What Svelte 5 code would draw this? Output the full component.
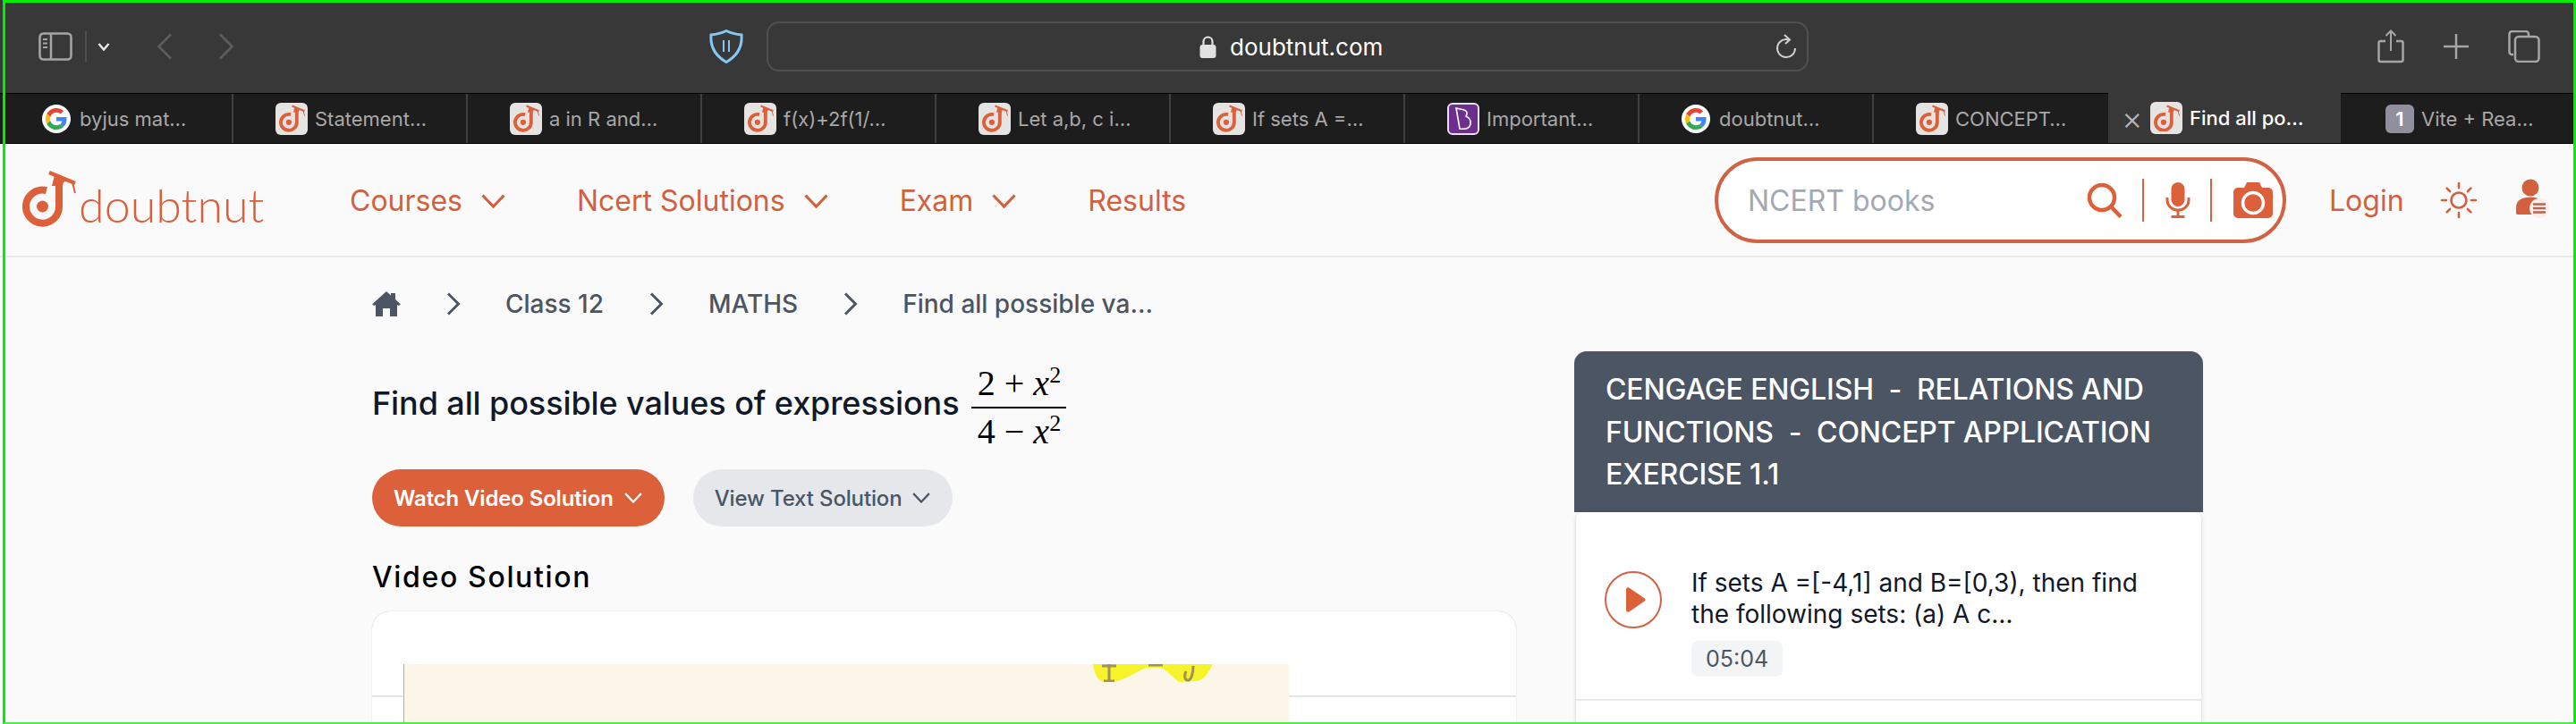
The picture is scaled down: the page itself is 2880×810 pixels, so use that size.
<script lang="ts">
  const tabs = [
    { icon: 'google', title: 'byjus mat…' },
    { icon: 'dn', title: 'Statement…' },
    { icon: 'dn', title: 'a in R and…' },
    { icon: 'dn', title: 'f(x)+2f(1/…' },
    { icon: 'dn', title: 'Let a,b, c i…' },
    { icon: 'dn', title: 'If sets A =…' },
    { icon: 'byjus', title: 'Important…' },
    { icon: 'google', title: 'doubtnut…' },
    { icon: 'dn', title: 'CONCEPT…' },
    { icon: 'dn', title: 'Find all po…', active: true },
    { icon: 'one', title: 'Vite + Rea…' }
  ];
  const navItems = [
    { label: 'Courses', caret: true },
    { label: 'Ncert Solutions', caret: true },
    { label: 'Exam', caret: true },
    { label: 'Results', caret: false }
  ];
</script>

{#snippet dnMark(size)}
  <svg width={size} height={size * 64 / 60} viewBox="0 0 60 64" fill="none" stroke="currentColor">
    <path d="M27 23.2A18.5 18.5 0 1 0 41 41V17" stroke-width="8" />
    <circle cx="22.5" cy="41" r="6.5" fill="currentColor" stroke="none" />
    <path d="M30 3L59 15" stroke-width="4.5" />
    <path d="M36 6L33 18H38L43 25L46 14L50 12Z" fill="currentColor" stroke="none" />
    <path d="M56 14L59 26" stroke-width="2" />
  </svg>
{/snippet}

{#snippet chevron(w, h, sw)}
  <svg width={w} height={h} viewBox="0 0 27 16" fill="none" stroke="currentColor" stroke-width={sw} preserveAspectRatio="none">
    <path d="M1.5 1.5L13.5 14L25.5 1.5" />
  </svg>
{/snippet}

{#snippet crumbArrow()}
  <svg class="crumb-arrow" width="16" height="26" viewBox="0 0 16 26" fill="none" stroke="currentColor" stroke-width="3">
    <path d="M2 1.5L13.5 13L2 24.5" />
  </svg>
{/snippet}

<div class="screen">
  <header class="toolbar">
    <div class="tool-left">
      <svg width="38" height="32" viewBox="0 0 38 32" fill="none" stroke="#a6a6a6" stroke-width="2.5">
        <rect x="1.5" y="1.5" width="35" height="29" rx="4" />
        <path d="M14 2V30" />
        <path d="M5 8H10M5 12.5H10M5 17H10" stroke-width="2" />
      </svg>
      <span class="tool-sep"></span>
      <svg class="small-caret" width="14" height="9" viewBox="0 0 14 9" fill="none" stroke="#e6e6e6" stroke-width="2.5">
        <path d="M1.5 1L7 7.5L12.5 1" />
      </svg>
      <svg class="back" width="18" height="30" viewBox="0 0 18 30" fill="none" stroke="#5e5e5e" stroke-width="2.5">
        <path d="M16 1.5L2.5 15L16 28.5" />
      </svg>
      <svg class="forward" width="18" height="30" viewBox="0 0 18 30" fill="none" stroke="#5e5e5e" stroke-width="2.5">
        <path d="M2 1.5L15.5 15L2 28.5" />
      </svg>
    </div>
    <svg class="shield" width="38" height="38" viewBox="0 0 38 38" fill="none" stroke="#84c8f5" stroke-width="3">
      <path d="M19 1.5C25 4.5 30 5.5 36 6C37 18 32 29 19 36.5C6 29 1 18 2 6C8 5.5 13 4.5 19 1.5Z" />
      <path d="M16 12V25M22 12V25" stroke-width="2" />
    </svg>
    <div class="urlbar">
      <span class="url-center">
        <svg width="19" height="25" viewBox="0 0 19 25" fill="none">
          <path d="M4.5 11V6.5a5 5 0 0 1 10 0V11" stroke="#e2e2e2" stroke-width="2.2" />
          <rect x="0.5" y="10" width="18" height="15" rx="3" fill="#e2e2e2" />
        </svg>
        <span class="url-text">doubtnut.com</span>
      </span>
      <svg class="reload" width="24" height="28" viewBox="0 0 24 28" fill="none" stroke="#d0d0d0" stroke-width="2">
        <path d="M15 6.5A10 10 0 1 0 22 16" />
        <path d="M10 1L16 6.5L11 11" />
      </svg>
    </div>
    <div class="tool-right">
      <svg width="30" height="38" viewBox="0 0 30 38" fill="none" stroke="#a6a6a6" stroke-width="2.5">
        <path d="M9 13H3.5a2 2 0 0 0-2 2V34a2 2 0 0 0 2 2H26.5a2 2 0 0 0 2-2V15a2 2 0 0 0-2-2H21" />
        <path d="M15 24V2M9.5 7L15 1.5L20.5 7" stroke-width="2" />
      </svg>
      <svg width="28" height="28" viewBox="0 0 28 28" stroke="#a6a6a6" stroke-width="2.5">
        <path d="M14 0V28M0 14H28" />
      </svg>
      <svg width="36" height="36" viewBox="0 0 36 36" fill="none" stroke="#a6a6a6" stroke-width="2.5">
        <path d="M6 27H4a3 3 0 0 1-2.5-3V4a3 3 0 0 1 3-3H20a3 3 0 0 1 3 3V7" />
        <rect x="8" y="7" width="26.5" height="28" rx="4" />
      </svg>
    </div>
  </header>

  <nav class="tabstrip">
    {#each tabs as tab}
      <div class="tab" class:active={tab.active}>
        {#if tab.active}<span class="tab-close">×</span>{/if}
        {#if tab.icon === 'dn'}
          <span class="fav fav-dn">{@render dnMark(29)}</span>
        {:else if tab.icon === 'google'}
          <span class="fav-google">
            <svg width="24" height="24" viewBox="0 0 48 48">
              <path fill="#EA4335" d="M24 9.5c3.54 0 6.71 1.22 9.21 3.6l6.85-6.85C35.9 2.38 30.47 0 24 0 14.62 0 6.51 5.38 2.56 13.22l7.98 6.19C12.43 13.72 17.74 9.5 24 9.5z" />
              <path fill="#4285F4" d="M46.98 24.55c0-1.57-.15-3.09-.38-4.55H24v9.02h12.94c-.58 2.96-2.26 5.48-4.78 7.18l7.73 6c4.51-4.18 7.09-10.36 7.09-17.65z" />
              <path fill="#FBBC05" d="M10.53 28.59c-.48-1.45-.76-2.99-.76-4.59s.27-3.14.76-4.59l-7.98-6.19C.92 16.46 0 20.12 0 24c0 3.88.92 7.54 2.56 10.78l7.97-6.19z" />
              <path fill="#34A853" d="M24 48c6.48 0 11.93-2.13 15.89-5.81l-7.73-6c-2.15 1.45-4.92 2.3-8.16 2.3-6.26 0-11.57-4.22-13.47-9.91l-7.98 6.19C6.51 42.62 14.62 48 24 48z" />
            </svg>
          </span>
        {:else if tab.icon === 'byjus'}
          <span class="fav fav-byjus">
            <svg width="24" height="28" viewBox="0 0 24 28" fill="none" stroke="#fff" stroke-width="1.6">
              <path d="M4 2L13 4C16 5 17 8 15 11C19 13 21 16 20 20C19 24 15 26 8 25Z" />
            </svg>
          </span>
        {:else}
          <span class="fav-one">1</span>
        {/if}
        <span class="tab-title">{tab.title}</span>
      </div>
    {/each}
  </nav>

  <div class="page">
    <div class="sitebar">
      <a class="logo">
        {@render dnMark(60)}
        <span class="logo-word">doubtnut</span>
      </a>
      <ul class="nav">
        {#each navItems as item}
          <li>
            {item.label}
            {#if item.caret}{@render chevron(27, 16, 3.2)}{/if}
          </li>
        {/each}
      </ul>
      <div class="search">
        <span class="placeholder">NCERT books</span>
        <svg class="search-icon" width="40" height="40" viewBox="0 0 40 40" fill="none" stroke="currentColor" stroke-width="4.5">
          <circle cx="17" cy="17" r="14" />
          <path d="M27 27L38 38.5" />
        </svg>
        <span class="search-sep"></span>
        <svg width="28" height="40" viewBox="0 0 28 40" fill="none" stroke="currentColor">
          <rect x="6.5" y="0" width="15" height="27" rx="7.5" fill="currentColor" stroke="none" />
          <path d="M2 17V20A12 11 0 0 0 26 20V17" stroke-width="3" />
          <path d="M14 31V38" stroke-width="3" />
          <path d="M6.5 38.5H21.5" stroke-width="3" />
        </svg>
        <span class="search-sep"></span>
        <svg width="44" height="40" viewBox="0 0 44 40">
          <path fill="currentColor" d="M15 0H29L32 6H39A5 5 0 0 1 44 11V35A5 5 0 0 1 39 40H5A5 5 0 0 1 0 35V11A5 5 0 0 1 5 6H12Z" />
          <circle cx="22" cy="23" r="11.5" fill="none" stroke="#fff" stroke-width="3.5" />
        </svg>
      </div>
      <span class="login">Login</span>
      <svg class="sun" width="42" height="42" viewBox="0 0 42 42" fill="none" stroke="currentColor" stroke-width="2.6" stroke-linecap="round">
        <circle cx="21" cy="21" r="8.5" />
        <path d="M21 2V7M21 35V40M2 21H7M35 21H40M7.6 7.6L11 11M31 31L34.4 34.4M7.6 34.4L11 31M31 11L34.4 7.6" />
      </svg>
      <svg class="user" width="44" height="48" viewBox="0 0 44 48">
        <circle cx="18" cy="10" r="9.5" fill="currentColor" />
        <path fill="currentColor" d="M2 38V32C2 24 9 20.5 18 20.5S34 24 34 32V38C34 40 32 40 30 40H5C3 40 2 40 2 38Z" />
        <circle cx="28" cy="33" r="11" fill="#fbeee9" />
        <path d="M21 28.5H35M21 33H35M21 37.5H35" stroke="#b9654f" stroke-width="2.6" />
      </svg>
    </div>

    <main class="content">
      <section class="question">
        <div class="crumbs">
          <svg class="home" width="32" height="28" viewBox="0 0 32 28">
            <path fill="#4b5563" d="M16 0L21 4.5V2H26V9L32 14.5L29.5 16L28 15V28H20V19H12V28H4V15L2.5 16L0 14.5Z" />
          </svg>
          {@render crumbArrow()}
          <span>Class 12</span>
          {@render crumbArrow()}
          <span>MATHS</span>
          {@render crumbArrow()}
          <span>Find all possible va…</span>
        </div>

        <h1 class="title">
          <span>Find all possible values of expressions</span>
          <span class="frac">
            <span class="num">2 + <i>x</i><sup>2</sup></span>
            <span class="den">4 − <i>x</i><sup>2</sup></span>
          </span>
        </h1>

        <div class="actions">
          <button class="btn btn-primary">Watch Video Solution {@render chevron(20, 12, 3)}</button>
          <button class="btn btn-muted">View Text Solution {@render chevron(20, 12, 3)}</button>
        </div>

        <h2 class="video-heading">Video Solution</h2>
        <div class="video-card">
          <div class="video-rule"></div>
          <div class="video-frame">
            <svg class="scribble" width="134" height="20" viewBox="0 0 134 20">
              <path fill="#f6f32a" d="M0 0H134C130 8 124 18 116 19L96 20C88 14 84 8 76 4H60C48 8 36 18 22 20H12C4 18 1 8 0 0Z" />
              <path d="M18 0V19M12 19H24M10 2H26M62 1H78M112 2C112 10 110 18 106 18C102 18 102 12 104 8" fill="none" stroke="#a0905a" stroke-width="3" />
            </svg>
          </div>
        </div>
      </section>

      <aside class="playlist">
        <div class="playlist-head">CENGAGE ENGLISH &nbsp;-&nbsp; RELATIONS AND FUNCTIONS &nbsp;-&nbsp; CONCEPT APPLICATION EXERCISE 1.1</div>
        <div class="playlist-body">
          <div class="item">
            <span class="play">
              <svg width="22" height="28" viewBox="0 0 22 28">
                <path fill="#dc603a" d="M0 3C0 .5 2 -.5 4 1L20 12C22 13 22 15 20 16L4 27C2 28.5 0 27.5 0 25Z" />
              </svg>
            </span>
            <div class="item-text">
              <p>If sets A =[-4,1] and B=[0,3), then find the following sets: (a) A c…</p>
              <span class="duration">05:04</span>
            </div>
          </div>
        </div>
      </aside>
    </main>
  </div>

  <div class="frame"></div>
</div>

<style>
  :global(body) {
    margin: 0;
    background: #fafafa;
  }
  .screen {
    position: relative;
    width: 2880px;
    height: 810px;
    overflow: hidden;
    font-family: Inter, "Noto Sans", sans-serif;
  }
  .frame {
    position: absolute;
    top: 0;
    left: 3px;
    right: 0;
    bottom: 0;
    border-style: solid;
    border-color: #00f000;
    border-width: 3px 3px 2px 3px;
    border-bottom-color: #55e855;
    pointer-events: none;
  }

  .toolbar {
    box-sizing: border-box;
    height: 104px;
    background: #383838;
    display: flex;
    align-items: center;
    padding: 0 40px 0 43px;
  }
  .tool-left {
    display: flex;
    align-items: center;
    width: 750px;
  }
  .tool-sep {
    width: 2px;
    height: 36px;
    background: #4d4d4d;
    margin-left: 14px;
  }
  .small-caret {
    margin-left: 12px;
  }
  .back {
    margin-left: 52px;
  }
  .forward {
    margin-left: 51px;
  }
  .shield {
    flex: none;
    margin-right: 26px;
  }
  .urlbar {
    box-sizing: border-box;
    width: 1165px;
    height: 56px;
    border: 2px solid #505050;
    border-radius: 14px;
    display: flex;
    align-items: center;
    padding-right: 11px;
  }
  .url-center {
    display: flex;
    align-items: center;
    gap: 15px;
    margin-left: 482px;
    flex: 1;
  }
  .url-text {
    font-size: 26px;
    color: #fff;
    font-weight: 400;
  }
  .tool-right {
    margin-left: auto;
    display: flex;
    align-items: center;
    gap: 44px;
  }

  .tabstrip {
    box-sizing: border-box;
    height: 57px;
    display: flex;
    background: #1d1d1d;
    border-top: 1px solid #000;
    border-bottom: 1px solid #000;
  }
  .tab {
    box-sizing: border-box;
    flex: none;
    width: 262px;
    display: flex;
    align-items: center;
    gap: 8px;
    padding-left: 47px;
    border-right: 2px solid #3f3f3f;
    color: #a8a8a8;
    font-size: 22px;
  }
  .tab:first-child {
    width: 261px;
  }
  .tab:has(+ .active) {
    border-right: none;
  }
  .tab.active {
    background: #383838;
    color: #fff;
    font-weight: 500;
    padding-left: 15px;
    width: 260px;
    border-right: none;
    margin-top: -1px;
  }
  .tab:last-child {
    border-right: none;
    padding-left: 50px;
    width: 262px;
  }
  .tab-close {
    font-size: 36px;
    font-weight: 300;
    color: #b5b5b5;
    width: 24px;
    line-height: 1;
  }
  .fav {
    box-sizing: border-box;
    flex: none;
    width: 36px;
    height: 36px;
    border-radius: 6px;
    display: flex;
    align-items: center;
    justify-content: center;
  }
  .fav-dn {
    background: #e6e4e2;
    color: #dc603a;
  }
  .fav-byjus {
    background: #6d2f8c;
    border: 2px solid #ecdff2;
  }
  .fav-google {
    flex: none;
    width: 32px;
    height: 32px;
    border-radius: 50%;
    background: #fff;
    display: flex;
    align-items: center;
    justify-content: center;
    margin-right: 2px;
  }
  .fav-one {
    flex: none;
    width: 32px;
    height: 32px;
    border-radius: 6px;
    background: #8f909c;
    color: #fff;
    font-size: 22px;
    font-weight: 600;
    text-align: center;
    line-height: 32px;
  }
  .tab-title {
    white-space: nowrap;
  }

  .page {
    background: #fafafa;
    height: 649px;
  }
  .sitebar {
    box-sizing: border-box;
    height: 127px;
    border-bottom: 2px solid #e8e9ee;
    display: flex;
    align-items: center;
    padding-left: 25px;
    color: #d2603f;
  }
  .logo {
    display: flex;
    align-items: flex-end;
    color: #dc603a;
    width: 366px;
    padding-bottom: 4px;
  }
  .logo svg {
    flex: none;
  }
  .logo-word {
    font-family: Lato, sans-serif;
    font-weight: 300;
    font-size: 52px;
    line-height: 52px;
    color: #d9603b;
    margin-left: 3px;
    position: relative;
    top: 1px;
  }
  .nav {
    list-style: none;
    margin: 0;
    padding: 2px 0 0;
    display: flex;
    gap: 80px;
    font-size: 32px;
    width: 1526px;
  }
  .nav li {
    display: flex;
    align-items: center;
    gap: 21px;
  }
  .search {
    box-sizing: border-box;
    flex: none;
    width: 639px;
    height: 96px;
    border: 4px solid #cf6343;
    border-radius: 48px;
    background: #fff;
    display: flex;
    align-items: center;
    padding: 0 11px 0 33px;
    color: #dc603a;
  }
  .placeholder {
    font-size: 32px;
    color: #a3a8b3;
    margin-right: auto;
    padding-top: 2px;
  }
  .search-sep {
    width: 2px;
    height: 48px;
    background: #dc603a;
    margin: 0 24px 0 22px;
  }
  .login {
    margin-left: 48px;
    padding-top: 2px;
    font-size: 32px;
  }
  .sun {
    margin-left: 40px;
    flex: none;
  }
  .user {
    margin-left: 41px;
    flex: none;
  }

  .content {
    display: flex;
    align-items: flex-start;
    gap: 65px;
    padding-left: 416px;
  }
  .question {
    flex: none;
    width: 1279px;
  }
  .crumbs {
    display: flex;
    align-items: center;
    height: 60px;
    margin-top: 22px;
    font-size: 28px;
    font-weight: 500;
    color: #4b5563;
  }
  .home {
    margin-right: 51px;
  }
  .crumb-arrow {
    flex: none;
  }
  .crumbs span {
    margin: 0 51px 0 50px;
    white-space: nowrap;
  }
  .title {
    display: flex;
    align-items: center;
    gap: 14px;
    margin: 32px 0 0;
    height: 98px;
    font-size: 36px;
    font-weight: 500;
    letter-spacing: -0.1px;
    color: #111827;
  }
  .frac {
    font-family: "Liberation Serif", serif;
    font-weight: 400;
    font-size: 40px;
    letter-spacing: 0;
    display: flex;
    flex-direction: column;
    align-items: stretch;
    text-align: center;
    line-height: 46px;
    color: #000;
    width: 106px;
    padding-top: 10px;
    white-space: nowrap;
  }
  .frac sup {
    font-size: 26px;
    line-height: 0;
  }
  .num {
    border-bottom: 2px solid #000;
    padding-bottom: 3px;
  }
  .den {
    padding-top: 3px;
  }
  .actions {
    display: flex;
    gap: 32px;
    margin-top: 25px;
  }
  .btn {
    font-family: inherit;
    border: none;
    height: 64px;
    border-radius: 32px;
    font-size: 24px;
    font-weight: 500;
    letter-spacing: -0.15px;
    padding: 0 25px 0 24px;
    display: flex;
    align-items: center;
    gap: 12px;
    white-space: nowrap;
  }
  .btn-primary {
    background: #dc603a;
    color: #fff;
    font-weight: 600;
  }
  .btn-muted {
    background: #e5e7eb;
    color: #4b5563;
  }
  .video-heading {
    margin: 36px 0 0;
    height: 42px;
    line-height: 42px;
    font-size: 32px;
    font-weight: 500;
    letter-spacing: 1.65px;
    color: #000;
  }
  .video-card {
    position: relative;
    height: 200px;
    margin-top: 17px;
    background: #fff;
    border-radius: 20px 20px 0 0;
    box-shadow: 0 0 1px rgba(0, 0, 0, 0.35);
    padding: 59px 0 0 35px;
    box-sizing: border-box;
  }
  .video-rule {
    position: absolute;
    left: 0;
    right: 0;
    top: 94px;
    height: 2px;
    background: #e5e5e5;
  }
  .video-frame {
    position: relative;
    width: 990px;
    height: 100%;
    box-sizing: border-box;
    background: #fcf6e8;
    border-left: 1px solid #b9aab5;
  }
  .scribble {
    position: absolute;
    left: 770px;
    top: 0;
  }
  .playlist {
    flex: none;
    width: 703px;
    margin-top: 105px;
  }
  .playlist-head {
    box-sizing: border-box;
    height: 180px;
    padding: 19px 30px 0 35px;
    background: #4b5563;
    border-radius: 14px 14px 0 0;
    color: #fff;
    font-size: 32px;
    font-weight: 500;
    letter-spacing: -0.15px;
    line-height: 47.5px;
  }
  .playlist-body {
    margin: 0 2px;
    background: #fff;
    border-radius: 8px 8px 0 0;
    box-shadow: 0 1px 5px rgba(0, 0, 0, 0.16);
    height: 300px;
  }
  .item {
    box-sizing: border-box;
    height: 211px;
    border-bottom: 2px solid #e8e9ec;
    display: flex;
    padding: 62px 30px 0 32px;
    gap: 33px;
  }
  .play {
    box-sizing: border-box;
    flex: none;
    width: 64px;
    height: 64px;
    margin-top: 4px;
    border: 2px solid #cf6343;
    border-radius: 50%;
    display: flex;
    align-items: center;
    justify-content: center;
    padding-left: 5px;
  }
  .item-text p {
    margin: 0;
    font-size: 28px;
    line-height: 34.5px;
    color: #111827;
  }
  .duration {
    display: inline-block;
    margin-top: 13px;
    padding: 0 16px;
    height: 40px;
    line-height: 40px;
    background: #f3f4f6;
    border-radius: 8px;
    font-size: 25px;
    color: #4b5563;
  }
</style>
